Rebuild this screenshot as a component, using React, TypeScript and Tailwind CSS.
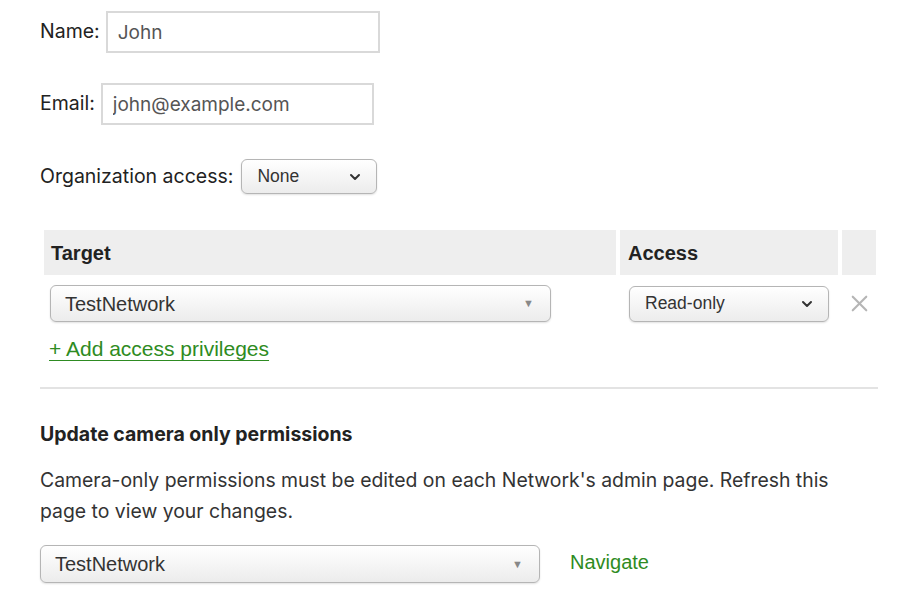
import { ChevronDown, X } from "lucide-react";

const labelClass = "text-[19.5px] text-[#222] font-['Inter',sans-serif]";
const inputClass =
  "h-[42px] border-2 border-[#d9d9d9] bg-white px-[10px] text-[19px] text-[#555] font-['Inter',sans-serif] outline-none";
const selectClass =
  "flex items-center justify-between rounded-[6px] border-[1.5px] border-[#b5b5b5] bg-gradient-to-b from-white to-[#ececec] shadow-[0_1px_2px_rgba(0,0,0,0.12)] text-[#333] font-['Liberation_Sans',Arial,sans-serif]";

function TriangleSelect({ value, className }: { value: string; className: string }) {
  return (
    <div className={`${selectClass} ${className} pl-[14px] pr-[16px] text-[20px]`}>
      <span>{value}</span>
      <span className="text-[11px] text-[#888]">▼</span>
    </div>
  );
}

function ChevronSelect({ value, className }: { value: string; className: string }) {
  return (
    <div className={`${selectClass} ${className} pl-[15px] pr-[13px] text-[17.5px] font-['Inter',sans-serif]`}>
      <span>{value}</span>
      <ChevronDown size={16} strokeWidth={3} className="text-[#333]" />
    </div>
  );
}

export default function App() {
  return (
    <div className="w-[918px] h-[592px] bg-white pl-[40px] pt-[11px] font-['Inter',sans-serif] overflow-hidden">
      <div className="flex items-center gap-[6px]">
        <span className={labelClass}>Name:</span>
        <input className={`${inputClass} w-[274px]`} defaultValue="John" />
      </div>

      <div className="flex items-center gap-[6px] mt-[30px]">
        <span className={labelClass}>Email:</span>
        <input className={`${inputClass} w-[273px]`} defaultValue="john@example.com" />
      </div>

      <div className="flex items-center gap-[8px] mt-[34px]">
        <span className={labelClass}>Organization access:</span>
        <ChevronSelect value="None" className="w-[136px] h-[35px]" />
      </div>

      {/* ACCESS TABLE */}
      <div className="mt-[36px] ml-[4px] w-[832px]">
        <div className="grid grid-cols-[572px_218px_34px] gap-x-[4px] h-[45px] font-['Liberation_Sans',Arial,sans-serif] font-bold text-[20px] text-[#222]">
          <div className="bg-[#eeeeee] flex items-center pl-[7px]">Target</div>
          <div className="bg-[#eeeeee] flex items-center pl-[8px]">Access</div>
          <div className="bg-[#eeeeee]" />
        </div>
        <div className="grid grid-cols-[572px_218px_34px] gap-x-[4px] mt-[10px] items-center">
          <div className="pl-[6px]">
            <TriangleSelect value="TestNetwork" className="w-[501px] h-[37px]" />
          </div>
          <div className="pl-[9px]">
            <ChevronSelect value="Read-only" className="w-[200px] h-[36px]" />
          </div>
          <div className="flex justify-center">
            <X size={27} strokeWidth={1.9} className="text-[#b5b5b5]" />
          </div>
        </div>
        <a
          href="#"
          className="inline-block mt-[11px] ml-[5px] text-[21px] text-[#2e8b22] underline underline-offset-[4px] decoration-[1px] font-['Liberation_Sans',Arial,sans-serif]"
        >
          + Add access privileges
        </a>
      </div>

      <div className="mt-[22px] w-[838px] border-t-2 border-[#e3e3e3]" />

      <h3 className="mt-[31px] text-[19.5px] font-bold text-[#222]">Update camera only permissions</h3>

      <p className="mt-[16px] w-[838px] text-[19.4px] leading-[31px] text-[#333]">
        Camera-only permissions must be edited on each Network's admin page. Refresh this page to view your changes.
      </p>

      <div className="flex items-center mt-[18px]">
        <TriangleSelect value="TestNetwork" className="w-[500px] h-[38px]" />
        <a href="#" className="ml-[30px] -mt-[4px] text-[20px] text-[#2e8b22] font-['Liberation_Sans',Arial,sans-serif]">
          Navigate
        </a>
      </div>
    </div>
  );
}
